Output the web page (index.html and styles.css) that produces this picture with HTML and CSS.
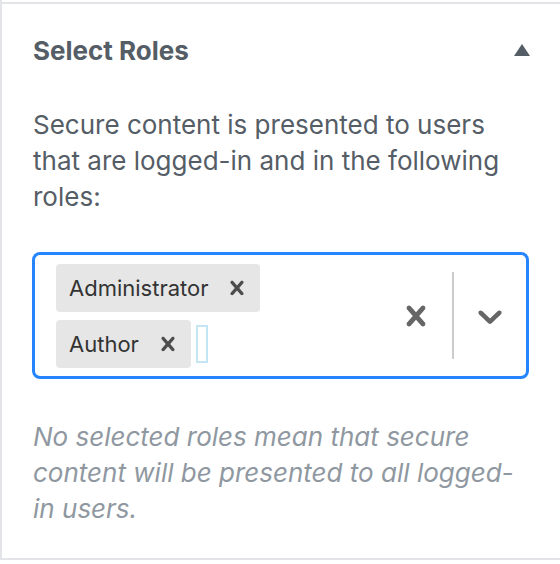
FILE: index.html
```html
<!DOCTYPE html>
<html lang="en">
<head>
<meta charset="utf-8">
<title>Select Roles</title>
<link rel="stylesheet" href="styles.css">
</head>
<body>
<div class="sidebar">
  <div class="panel">
    <h2 class="panel-title">
      <span class="panel-title-text">Select Roles</span>
      <svg class="panel-toggle" width="16" height="12" viewBox="0 0 16 12" aria-hidden="true"><path d="M8 0 L16 12 L0 12 Z"/></svg>
    </h2>
    <div class="panel-body">
      <p class="intro">Secure content is presented to users that are logged-in and in the following roles:</p>
      <div class="select">
        <div class="value-container">
          <div class="chip">
            <span class="chip-label">Administrator</span>
            <span class="chip-remove"><svg width="28" height="28" viewBox="0 0 20 20"><path d="M14.348 14.849c-0.469 0.469-1.229 0.469-1.697 0l-2.651-3.030-2.651 3.029c-0.469 0.469-1.229 0.469-1.697 0-0.469-0.469-0.469-1.229 0-1.697l2.758-3.15-2.759-3.152c-0.469-0.469-0.469-1.228 0-1.697s1.228-0.469 1.697 0l2.652 3.031 2.651-3.031c0.469-0.469 1.228-0.469 1.697 0s0.469 1.229 0 1.697l-2.758 3.152 2.758 3.150c0.469 0.469 0.469 1.229 0 1.698z"/></svg></span>
          </div>
          <div class="chip">
            <span class="chip-label">Author</span>
            <span class="chip-remove"><svg width="28" height="28" viewBox="0 0 20 20"><path d="M14.348 14.849c-0.469 0.469-1.229 0.469-1.697 0l-2.651-3.030-2.651 3.029c-0.469 0.469-1.229 0.469-1.697 0-0.469-0.469-0.469-1.229 0-1.697l2.758-3.15-2.759-3.152c-0.469-0.469-0.469-1.228 0-1.697s1.228-0.469 1.697 0l2.652 3.031 2.651-3.031c0.469-0.469 1.228-0.469 1.697 0s0.469 1.229 0 1.697l-2.758 3.152 2.758 3.150c0.469 0.469 0.469 1.229 0 1.698z"/></svg></span>
          </div>
          <span class="input-caret"></span>
        </div>
        <div class="indicators">
          <span class="indicator"><svg width="40" height="40" viewBox="0 0 20 20"><path d="M14.348 14.849c-0.469 0.469-1.229 0.469-1.697 0l-2.651-3.030-2.651 3.029c-0.469 0.469-1.229 0.469-1.697 0-0.469-0.469-0.469-1.229 0-1.697l2.758-3.15-2.759-3.152c-0.469-0.469-0.469-1.228 0-1.697s1.228-0.469 1.697 0l2.652 3.031 2.651-3.031c0.469-0.469 1.228-0.469 1.697 0s0.469 1.229 0 1.697l-2.758 3.152 2.758 3.150c0.469 0.469 0.469 1.229 0 1.698z"/></svg></span>
          <span class="separator"></span>
          <span class="indicator"><svg width="40" height="40" viewBox="0 0 20 20"><path d="M4.516 7.548c0.436-0.446 1.043-0.481 1.576 0l3.908 3.747 3.908-3.747c0.533-0.481 1.141-0.446 1.574 0 0.436 0.445 0.408 1.197 0 1.615-0.406 0.418-4.695 4.502-4.695 4.502-0.217 0.223-0.502 0.335-0.787 0.335s-0.57-0.112-0.789-0.335c0 0-4.287-4.084-4.695-4.502s-0.436-1.17 0-1.615z"/></svg></span>
        </div>
      </div>
      <p class="help">No selected roles mean that secure content will be presented to all logged-in users.</p>
    </div>
  </div>
</div>
</body>
</html>
```

FILE: styles.css
```css
* { box-sizing: border-box; }
html, body { margin: 0; padding: 0; background: #fff; }
body {
  font-family: Inter, "Noto Sans", "Liberation Sans", sans-serif;
  color: #555d66;
  width: 560px;
  height: 564px;
  overflow: hidden;
}
.sidebar {
  border-left: 2px solid #e2e4e7;
  padding-top: 2px;
  height: 560px;
}
.panel {
  border-top: 2px solid #e2e4e7;
  border-bottom: 2px solid #e2e4e7;
  height: 558px;
}
.panel-title {
  margin: 0;
  height: 92px;
  display: flex;
  align-items: center;
  justify-content: space-between;
  padding: 0 30px 0 31px;
  font-size: 26px;
  font-weight: 700;
  color: #555d66;
}
.panel-toggle { fill: #555d66; display: block; margin-top: -1px; }
.panel-body {
  padding: 11px 31px 0 31px;
}
.intro {
  margin: 0 0 37px;
  font-size: 26px;
  line-height: 36px;
  color: #555d66;
}
.select {
  display: flex;
  align-items: stretch;
  border: 3px solid #2684ff;
  border-radius: 8px;
  height: 127px;
  margin-left: -1px;
  background: #fff;
}
.value-container {
  flex: 1;
  display: flex;
  flex-wrap: wrap;
  align-content: center;
  align-items: center;
  padding: 1px 16px 0 17px;
}
.chip {
  display: flex;
  align-items: center;
  background: #e6e6e6;
  border-radius: 4px;
  margin: 4px;
  height: 48px;
}
.chip-label {
  font-size: 22px;
  color: #333;
  padding: 0 7px 0 13px;
}
.chip-remove {
  display: flex;
  align-items: center;
  padding: 0 9px 0 8px;
  fill: #4d4d4d;
}
.chip-remove svg, .indicator svg { display: block; }
.input-caret {
  width: 12px;
  height: 38px;
  border: 2px solid #c4e5f3;
  margin-left: 1px;
}
.indicators {
  display: flex;
  align-items: center;
}
.indicator {
  padding: 16px;
  fill: #666;
}
.separator {
  align-self: stretch;
  width: 2px;
  background: #ccc;
  margin: 17px 0;
}
.help {
  margin: 40px 0 0;
  font-size: 26px;
  line-height: 36px;
  font-style: italic;
  color: #8f98a1;
}
```
